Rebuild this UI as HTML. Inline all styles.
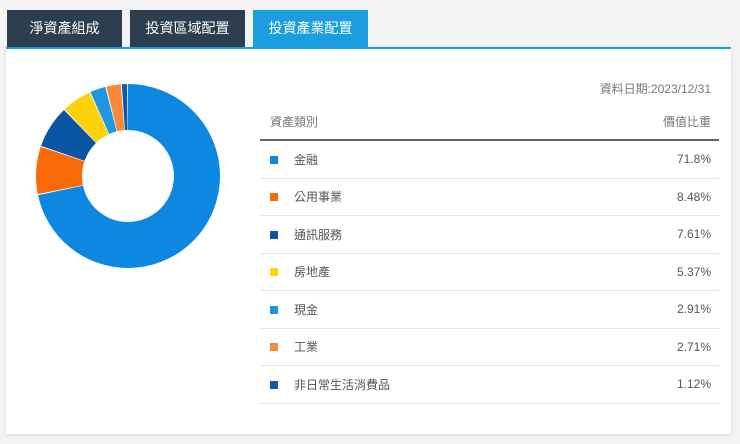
<!DOCTYPE html>
<html><head><meta charset="utf-8"><style>
body{margin:0;width:740px;height:444px;background:#f4f4f4;font-family:"Liberation Sans","Noto Sans CJK TC",sans-serif;position:relative;overflow:hidden}
.tab{position:absolute;top:10px;height:37px;width:115px;background:#2d3e4e;color:#fff;font-size:14px;line-height:37px;text-align:center}
.panel{position:absolute;left:6px;top:47px;width:725px;height:387px;background:#fff;border-top:2px solid #1a9ee0;box-sizing:border-box;box-shadow:0 1px 4px rgba(0,0,0,.12)}
.date{position:absolute;right:29px;top:80px;font-size:12px;color:#777}
table{position:absolute;left:260px;top:104px;width:459px;border-collapse:collapse;font-size:12px;color:#555}
th{font-weight:normal;color:#777;height:35px;text-align:left;padding:0 8px 0 10px;border-bottom:2px solid #666}
td{height:36.5px;border-bottom:1px solid #e6e6e6;padding:0 8px 0 10px}
.r{text-align:right}
.sq{display:inline-block;width:8px;height:8px;margin-right:16px;vertical-align:0}
</style></head><body>
<div class="panel"></div>
<div class="tab" style="left:7px">淨資產組成</div>
<div class="tab" style="left:130px">投資區域配置</div>
<div class="tab" style="left:253px;background:#1a9ee0">投資產業配置</div>
<svg style="position:absolute;left:0;top:0" width="260" height="300">
<g transform="rotate(-90 128 176)" fill="none" stroke-width="46">
<circle cx="128" cy="176" r="69" stroke="#0d87e0" stroke-dasharray="310.5 500" stroke-dashoffset="0"/>
<circle cx="128" cy="176" r="69" stroke="#f76a05" stroke-dasharray="36 500" stroke-dashoffset="-311.3"/>
<circle cx="128" cy="176" r="69" stroke="#0a56a5" stroke-dasharray="32.2 500" stroke-dashoffset="-348.06"/>
<circle cx="128" cy="176" r="69" stroke="#fcd20a" stroke-dasharray="22.5 500" stroke-dashoffset="-381.05"/>
<circle cx="128" cy="176" r="69" stroke="#2196e0" stroke-dasharray="11.8 500" stroke-dashoffset="-404.33"/>
<circle cx="128" cy="176" r="69" stroke="#f98a3c" stroke-dasharray="11 500" stroke-dashoffset="-416.95"/>
<circle cx="128" cy="176" r="69" stroke="#0f5aa8" stroke-dasharray="4 500" stroke-dashoffset="-428.7"/>
</g></svg>
<div class="date">資料日期:2023/12/31</div>
<table>
<tr><th>資產類別</th><th class="r">價值比重</th></tr>
<tr><td><span class="sq" style="background:#0d87e0"></span>金融</td><td class="r">71.8%</td></tr>
<tr><td><span class="sq" style="background:#f76a05"></span>公用事業</td><td class="r">8.48%</td></tr>
<tr><td><span class="sq" style="background:#0a56a5"></span>通訊服務</td><td class="r">7.61%</td></tr>
<tr><td><span class="sq" style="background:#fcd20a"></span>房地產</td><td class="r">5.37%</td></tr>
<tr><td><span class="sq" style="background:#2196e0"></span>現金</td><td class="r">2.91%</td></tr>
<tr><td><span class="sq" style="background:#f98a3c"></span>工業</td><td class="r">2.71%</td></tr>
<tr><td><span class="sq" style="background:#0f5aa8"></span>非日常生活消費品</td><td class="r">1.12%</td></tr>
</table>
</body></html>
